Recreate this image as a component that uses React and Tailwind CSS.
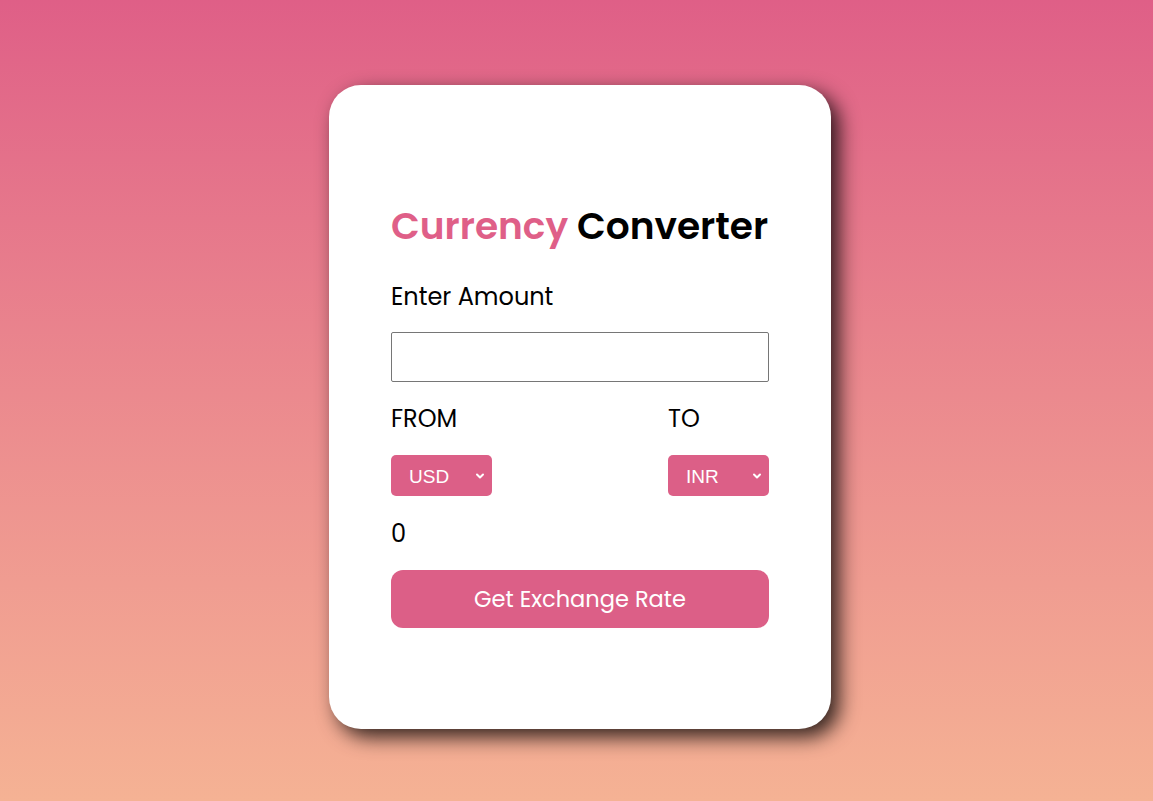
export default function App() {
  return (
    <div
      className="min-h-screen w-full flex items-start justify-center bg-linear-to-b from-[#df5f87] to-[#f5b294] pt-[85px] pl-[7px] text-black"
      style={{ fontFamily: '"Poppins", "Open Sans", "Noto Sans", sans-serif' }}
    >
      <div className="w-[502px] h-[644px] bg-white rounded-[32px] shadow-[8px_8px_20px_rgba(0,0,0,0.8)] px-[62px] pt-[119px] flex flex-col">
        {/* title */}
        <h1 className="text-[37.5px] leading-[44px] font-semibold whitespace-nowrap">
          <span className="text-[#df5f88]">Currency</span> Converter
        </h1>

        <label className="mt-[35px] text-[24px] leading-[28px]">Enter Amount</label>

        <input
          type="text"
          className="mt-[21px] h-[50px] w-full border border-[#767676] rounded-[2px] px-3 text-[18px] outline-none"
        />

        <div className="mt-[23px] flex justify-between">
          <div className="flex flex-col gap-[22px]">
            <span className="text-[24px] leading-[28px]">FROM</span>
            <CurrencySelect value="USD" />
          </div>
          <div className="flex flex-col gap-[22px]">
            <span className="text-[24px] leading-[28px]">TO</span>
            <CurrencySelect value="INR" />
          </div>
        </div>

        <p className="mt-[24px] text-[24px] leading-[28px]">0</p>

        <button className="mt-[22px] h-[58px] w-full rounded-[12px] bg-[#dc5f87] text-white text-[22.5px] pt-[2px]">
          Get Exchange Rate
        </button>
      </div>
    </div>
  );
}

function CurrencySelect({ value }) {
  return (
    <div className="w-[101px] h-[41px] rounded-[5px] bg-[#dc5f87] text-white flex items-center justify-between pl-[18px] pr-[7px]">
      <span
        className="text-[19px] leading-none pt-[2px]"
        style={{ fontFamily: '"Liberation Sans", Arial, sans-serif' }}
      >
        {value}
      </span>
      <svg width="10" height="10" viewBox="0 0 10 10" fill="none" stroke="currentColor" strokeWidth="2" strokeLinecap="round" strokeLinejoin="round">
        <path d="M2 3.5 5 6.5 8 3.5" />
      </svg>
    </div>
  );
}
